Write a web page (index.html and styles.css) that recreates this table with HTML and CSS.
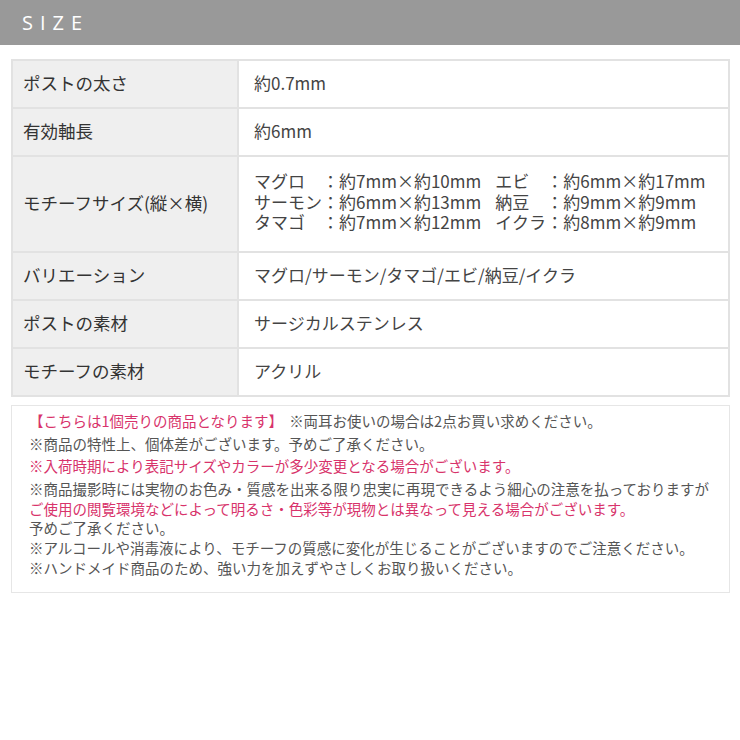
FILE: index.html
```html
<!DOCTYPE html>
<html lang="ja">
<head>
<meta charset="utf-8">
<title>SIZE</title>
<link rel="stylesheet" href="styles.css">
</head>
<body>
<header class="head"><h2 class="head-title">SIZE</h2></header>
<main class="content">
  <table class="spec">
    <tr><th>ポストの太さ</th><td>約0.7mm</td></tr>
    <tr><th>有効軸長</th><td>約6mm</td></tr>
    <tr class="tall"><th>モチーフサイズ(縦×横)</th><td>
      <div class="sizes">
        <span>マグロ</span><span class="v">：約7mm×約10mm</span><span>エビ</span><span>：約6mm×約17mm</span>
        <span>サーモン</span><span class="v">：約6mm×約13mm</span><span>納豆</span><span>：約9mm×約9mm</span>
        <span>タマゴ</span><span class="v">：約7mm×約12mm</span><span>イクラ</span><span>：約8mm×約9mm</span>
      </div>
    </td></tr>
    <tr><th>バリエーション</th><td>マグロ/サーモン/タマゴ/エビ/納豆/イクラ</td></tr>
    <tr><th>ポストの素材</th><td>サージカルステンレス</td></tr>
    <tr><th>モチーフの素材</th><td>アクリル</td></tr>
  </table>
  <div class="notes">
    <p class="gap"><span class="pink">【こちらは1個売りの商品となります】</span><span class="side">※両耳お使いの場合は2点お買い求めください。</span></p>
    <p class="gap">※商品の特性上、個体差がございます。予めご了承ください。</p>
    <p class="gap pink">※入荷時期により表記サイズやカラーが多少変更となる場合がございます。</p>
    <p>※商品撮影時には実物のお色み・質感を出来る限り忠実に再現できるよう細心の注意を払っておりますが<br><span class="pink">ご使用の閲覧環境などによって明るさ・色彩等が現物とは異なって見える場合がございます。</span><br>予めご了承ください。</p>
    <p>※アルコールや消毒液により、モチーフの質感に変化が生じることがございますのでご注意ください。</p>
    <p>※ハンドメイド商品のため、強い力を加えずやさしくお取り扱いください。</p>
  </div>
</main>
</body>
</html>
```
FILE: styles.css
```css
* { box-sizing: border-box; }
body {
  margin: 0;
  background: #fff;
  font-family: "Noto Sans CJK JP", sans-serif;
  color: #3a3a3a;
}
.head {
  height: 45px;
  background: #999999;
  padding-left: 22px;
  display: flex;
  align-items: center;
}
.head-title {
  margin: 0;
  font-family: "Open Sans", "Noto Sans", sans-serif;
  font-weight: 400;
  font-size: 20px;
  letter-spacing: 7px;
  color: #fff;
}
.content {
  padding: 14px 10px 0 11px;
}
.spec {
  width: 719px;
  border-collapse: collapse;
  border: 2px solid #e2e2e2;
}
.spec th, .spec td {
  border: 2px solid #e2e2e2;
  height: 48px;
  font-weight: 400;
  text-align: left;
  vertical-align: middle;
  padding: 0 10px 4px;
}
.spec th {
  width: 226px;
  font-size: 17.5px;
  background: #efefef;
  color: #333;
}
.spec td {
  font-size: 17px;
  padding-left: 15px;
  color: #444;
}
.spec .tall th, .spec .tall td { height: 96px; }
.sizes {
  display: grid;
  grid-template-columns: 4em max-content 3em max-content;
  justify-content: start;
  line-height: 20.5px;
  white-space: nowrap;
}
.sizes .v { margin-right: 14px; }
.notes {
  margin-top: 8px;
  border: 1px solid #e6e6e6;
  height: 188px;
  padding: 5px 17px;
  font-size: 14.5px;
  line-height: 19.8px;
  color: #555;
}
.notes p { margin: 0; }
.notes .gap { margin-bottom: 2.8px; }
.pink { color: #d8336b; }
.side { margin-left: 6px; }
```
